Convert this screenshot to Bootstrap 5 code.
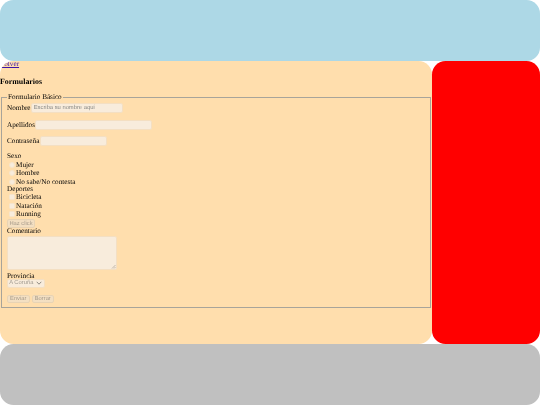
<!DOCTYPE html>
<html lang="es">
<head>
<meta charset="utf-8">
<title>Formularios</title>
<link rel="stylesheet" href="https://cdn.jsdelivr.net/npm/bootstrap@5.3.0/dist/css/bootstrap.min.css">
<style>
html,body{height:100%;margin:0}
body{background:#fff;font-family:"Liberation Serif",serif;font-size:7.2px;line-height:8px;color:#000;overflow:hidden;text-rendering:geometricPrecision}
.shell{height:405px;width:540px}
.band{height:60.75px;flex:none;border-radius:13.5px}
.top-band{background:#add8e6}
.bottom-band{background:#c0c0c0}
.mid{height:283.5px;flex:none}
.main-pane{width:432px;flex:none;background:#ffdead;border-radius:13.5px;overflow:hidden}
.side-pane{flex:1;background:#f00;border-radius:13.5px}
.soft-focus{filter:blur(.3px)}
.back-link{display:block;height:7px;line-height:7.6px;color:#3a14a8;text-decoration:underline}
.page-title{font-size:7.9px;font-weight:700;line-height:9px;margin:9px 0 7.5px}
.form-box{border:1.35px solid #a8a49a;margin:0 1px;padding:0 5px;height:214.5px;min-width:0;border-radius:0}
.form-box legend{float:none;width:auto;font-size:7.2px;line-height:8px;margin:-4.5px 0 0 0;padding:0 1px;background:#ffdead;display:table}
.field-line{display:flex;align-items:center;height:11px}
.inp{background:#f8ecdc;border:1px solid #f4dfc2;border-radius:2px;height:10px;padding:0 2px;font:5.8px/8px "Liberation Sans",sans-serif;color:#8a8a86;margin-left:.2px;box-sizing:border-box;display:block}
.opt-line{display:flex;align-items:center;height:8.4px;padding-left:1.5px}
.round-box,.sq-box{width:6px;height:6px;background:#f8ecdc;border:1px solid #f6e4cb;margin-right:1.5px;flex:none}
.round-box{border-radius:50%}
.sq-box{border-radius:1.5px}
.soft-btn{background:#f3dfc2;border:1px solid #e8d3b4;border-radius:2px;font:5.8px/6px "Liberation Sans",sans-serif;color:#a89c8c;display:flex;align-items:center;justify-content:center;height:8.5px}
.note-area{width:110px;height:33.5px;background:#f8ecdc;border:1px solid #f4dfc2;border-radius:2px;position:relative;margin-top:1px}
.note-area svg{position:absolute;right:0;bottom:0}
.prov-select{width:38px;height:9px;background:#f8ecdc;border:1px solid #f4dfc2;border-radius:2px;font:5.8px/7px "Liberation Sans",sans-serif;color:#a09a90;padding-left:1.2px;display:flex;align-items:center;justify-content:space-between;padding-right:2px;margin-top:-1.5px}
.text-row{height:7.4px;line-height:7.4px}
.prov-label{margin-top:3px}
.action-row{gap:2px;margin-top:7px}
.sexo-label{margin-top:6.5px}
.gap-field{margin-top:5.5px}
.first-field{margin-top:1.5px}
.btn-top{margin-top:1px}
.w-nombre{width:92px}.w-apellidos{width:117px}.w-pass{width:67px}.w-click{width:28px}.w-action{width:22.5px}
</style>
</head>
<body>
<div class="shell d-flex flex-column">
  <header class="band top-band"></header>
  <div class="mid d-flex">
    <main class="main-pane">
      <div class="soft-focus">
      <a href="#" class="back-link">Volver</a>
      <h4 class="page-title">Formularios</h4>
      <fieldset class="form-box">
        <legend>Formulario Básico</legend>
        <div class="field-line first-field"><span>Nombre</span><span class="inp w-nombre">Escriba su nombre aquí</span></div>
        <div class="field-line gap-field"><span>Apellidos</span><span class="inp w-apellidos"></span></div>
        <div class="field-line gap-field"><span>Contraseña</span><span class="inp w-pass"></span></div>
        <div class="text-row sexo-label">Sexo</div>
        <div class="opt-line"><span class="round-box"></span>Mujer</div>
        <div class="opt-line"><span class="round-box"></span>Hombre</div>
        <div class="opt-line"><span class="round-box"></span>No sabe/No contesta</div>
        <div class="text-row">Deportes</div>
        <div class="opt-line"><span class="sq-box"></span>Bicicleta</div>
        <div class="opt-line"><span class="sq-box"></span>Natación</div>
        <div class="opt-line"><span class="sq-box"></span>Running</div>
        <span class="soft-btn w-click btn-top">Haz click</span>
        <div class="text-row">Comentario</div>
        <div class="note-area"><svg width="5" height="5" viewBox="0 0 5 5"><path d="M1 4.5 4.5 1M3 4.5 4.5 3" stroke="#9a948a" stroke-width=".6" fill="none"/></svg></div>
        <div class="text-row prov-label">Provincia</div>
        <div class="prov-select"><span>A Coruña</span><svg width="6" height="4" viewBox="0 0 6 4"><path d="M.7.8 3 3.2 5.3.8" stroke="#8f8a82" stroke-width="1" fill="none"/></svg></div>
        <div class="d-flex action-row">
          <span class="soft-btn w-action">Enviar</span>
          <span class="soft-btn w-action">Borrar</span>
        </div>
      </fieldset>
      </div>
    </main>
    <aside class="side-pane"></aside>
  </div>
  <footer class="band bottom-band"></footer>
</div>
<script src="https://cdn.jsdelivr.net/npm/bootstrap@5.3.0/dist/js/bootstrap.bundle.min.js"></script>
</body>
</html>
